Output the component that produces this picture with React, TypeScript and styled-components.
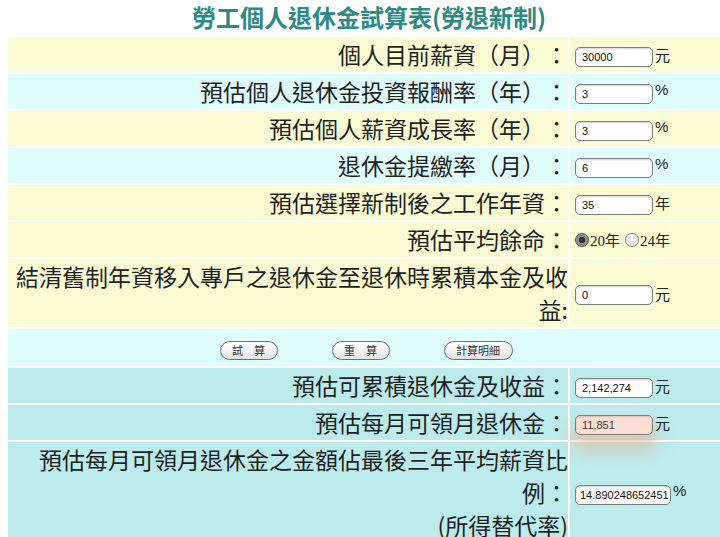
import { useState } from 'react'
import styled, { createGlobalStyle, css } from 'styled-components'

const GlobalStyle = createGlobalStyle`
  html, body {
    margin: 0;
    padding: 0;
    background: #ffffff;
    overflow: hidden;
  }
  body {
    font-family: "Noto Sans CJK TC", "Liberation Sans", sans-serif;
    color: #222;
    text-spacing-trim: space-all;
  }
`

type Tone = 'yellow' | 'cyan' | 'teal'

const tones: Record<Tone, string> = {
  yellow: '#fbfbd3',
  cyan: '#e0fdfd',
  teal: '#bcebec',
}

const Page = styled.div`
  padding: 6px 0 0 6px;
  width: 726px;
`

const Title = styled.h1`
  margin: 0 0 8px;
  font-size: 24px;
  line-height: 21px;
  font-weight: 700;
  color: #2b8a83;
  text-align: center;
`

const Table = styled.table`
  width: 720px;
  table-layout: fixed;
  border-collapse: separate;
  border-spacing: 2px;
`

const Row = styled.tr<{ $tone: Tone }>`
  background: ${({ $tone }) => tones[$tone]};
`

const LabelCell = styled.td`
  width: 558px;
  padding: 1px 0 1px 2px;
  text-align: right;
  vertical-align: middle;
  font-size: 23px;
  line-height: 33px;
  color: #1f1f1f;
`

const ValueCell = styled.td`
  padding: 0 0 0 5px;
  vertical-align: middle;
  white-space: nowrap;
`

const ButtonCell = styled.td`
  height: 37px;
  padding: 0;
  text-align: center;
  vertical-align: middle;
`

const Field = styled.input<{ $wide?: boolean; $glow?: boolean }>`
  box-sizing: border-box;
  width: ${({ $wide }) => ($wide ? '96px' : '78px')};
  height: 20px;
  padding: 0 2px 0 ${({ $wide }) => ($wide ? '4px' : '6px')};
  border: 1px solid #7d7d7d;
  border-radius: 5px;
  background: #fff;
  box-shadow: inset 0 1px 2px rgba(0, 0, 0, 0.18);
  font-family: "Liberation Sans", Arial, sans-serif;
  font-size: 11px;
  color: #111;
  vertical-align: middle;
  outline: none;
  ${({ $glow }) =>
    $glow &&
    css`
      background: #fcdfd3;
      color: #4a3a34;
      box-shadow: inset 0 1px 2px rgba(0, 0, 0, 0.15),
        0 12px 16px 4px rgba(236, 172, 132, 0.5);
    `}
`

const Unit = styled.span<{ $raised?: boolean }>`
  display: inline-block;
  margin-left: 2px;
  font-family: "Liberation Sans", "Noto Sans CJK TC", sans-serif;
  font-size: 15px;
  color: #222;
  vertical-align: middle;
  position: relative;
  top: ${({ $raised }) => ($raised ? '-4px' : '-2px')};
`

const RadioGroup = styled.span`
  display: inline-flex;
  align-items: center;
  gap: 5px;
  font-family: "Liberation Serif", "Noto Sans CJK TC", serif;
  font-size: 15px;
  color: #222;
`

const RadioLabel = styled.label`
  display: inline-flex;
  align-items: center;
  gap: 1px;
  cursor: pointer;
`

const Radio = styled.input`
  appearance: none;
  box-sizing: border-box;
  width: 14px;
  height: 14px;
  margin: 0;
  border: 1px solid #8a8a8a;
  border-radius: 50%;
  background: radial-gradient(circle at 50% 35%, #ffffff 0%, #d4d4d4 100%);

  &:checked {
    background: radial-gradient(circle, #333 0 3px, #8e8e8e 3.5px 100%);
    border-color: #555;
  }
`

const PillButton = styled.button<{ $wide?: boolean }>`
  box-sizing: border-box;
  width: ${({ $wide }) => ($wide ? '69px' : '58px')};
  height: 19px;
  margin: 0 27px;
  padding: 0;
  border: 1px solid #6e6e6e;
  border-radius: 10px;
  background: linear-gradient(#ffffff, #e4e4e4);
  font-family: "Noto Sans CJK TC", sans-serif;
  font-size: 11px;
  line-height: 17px;
  color: #333;
  cursor: pointer;
`

type InputRow = {
  label: string
  value: string
  unit: string
  tone: Tone
}

const inputRows: InputRow[] = [
  { label: '個人目前薪資（月）：', value: '30000', unit: '元', tone: 'yellow' },
  { label: '預估個人退休金投資報酬率（年）：', value: '3', unit: '%', tone: 'cyan' },
  { label: '預估個人薪資成長率（年）：', value: '3', unit: '%', tone: 'yellow' },
  { label: '退休金提繳率（月）：', value: '6', unit: '%', tone: 'cyan' },
  { label: '預估選擇新制後之工作年資：', value: '35', unit: '年', tone: 'yellow' },
]

export default function App() {
  const [life, setLife] = useState('20')

  return (
    <Page>
      <GlobalStyle />
      <Title>勞工個人退休金試算表(勞退新制)</Title>
      <Table>
        <tbody>
          {inputRows.map((r) => (
            <Row key={r.label} $tone={r.tone}>
              <LabelCell>{r.label}</LabelCell>
              <ValueCell>
                <Field defaultValue={r.value} />
                <Unit $raised={r.unit === '%'}>{r.unit}</Unit>
              </ValueCell>
            </Row>
          ))}
          <Row $tone="yellow">
            <LabelCell>預估平均餘命：</LabelCell>
            <ValueCell>
              <RadioGroup>
                <RadioLabel>
                  <Radio
                    type="radio"
                    name="life"
                    checked={life === '20'}
                    onChange={() => setLife('20')}
                  />
                  20年
                </RadioLabel>
                <RadioLabel>
                  <Radio
                    type="radio"
                    name="life"
                    checked={life === '24'}
                    onChange={() => setLife('24')}
                  />
                  24年
                </RadioLabel>
              </RadioGroup>
            </ValueCell>
          </Row>
          <Row $tone="yellow">
            <LabelCell>結清舊制年資移入專戶之退休金至退休時累積本金及收益:</LabelCell>
            <ValueCell>
              <Field defaultValue="0" />
              <Unit>元</Unit>
            </ValueCell>
          </Row>
          <Row $tone="cyan">
            <ButtonCell colSpan={2}>
              <PillButton>試　算</PillButton>
              <PillButton>重　算</PillButton>
              <PillButton $wide>計算明細</PillButton>
            </ButtonCell>
          </Row>
          <Row $tone="teal">
            <LabelCell>預估可累積退休金及收益：</LabelCell>
            <ValueCell>
              <Field defaultValue="2,142,274" />
              <Unit>元</Unit>
            </ValueCell>
          </Row>
          <Row $tone="teal">
            <LabelCell>預估每月可領月退休金：</LabelCell>
            <ValueCell>
              <Field defaultValue="11,851" $glow />
              <Unit>元</Unit>
            </ValueCell>
          </Row>
          <Row $tone="teal">
            <LabelCell>
              預估每月可領月退休金之金額佔最後三年平均薪資比例：
              <br />
              (所得替代率)
            </LabelCell>
            <ValueCell>
              <Field defaultValue="14.890248652451" $wide />
              <Unit $raised>%</Unit>
            </ValueCell>
          </Row>
        </tbody>
      </Table>
    </Page>
  )
}
